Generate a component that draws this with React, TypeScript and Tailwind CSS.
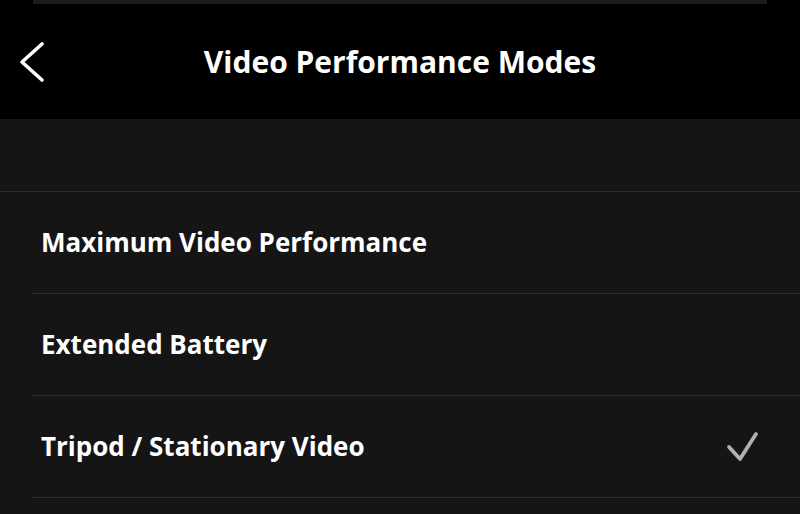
import React from "react";

const rows = [
  { label: "Maximum Video Performance", checked: false },
  { label: "Extended Battery", checked: false },
  { label: "Tripod / Stationary Video", checked: true },
  { label: "", checked: false },
];

export default function App() {
  return (
    <div
      className="w-[800px] h-[514px] overflow-hidden bg-[#151515] text-white"
      style={{ fontFamily: "'Open Sans', Lato, sans-serif" }}
    >
      <div className="bg-black h-[119px] flex flex-col">
        <div className="mx-[33px] h-[4px] bg-[#1c1c1c]" />
        <div className="relative flex-1 flex items-center justify-center">
          <svg
            className="absolute left-[18px] top-[37px]"
            width="28"
            height="42"
            viewBox="0 0 28 42"
            fill="none"
          >
            <path
              d="M24 3 L4 21 L24 39"
              stroke="white"
              strokeWidth="3.6"
              strokeLinecap="round"
              strokeLinejoin="round"
            />
          </svg>
          <h1 className="text-[30px] font-bold">Video Performance Modes</h1>
        </div>
      </div>
      <div className="h-[72px]" />
      <div className="border-t border-[#2a2a2a]">
        {rows.map((r, i) => (
          <div key={i} className="pl-[32px]">
            <div className="h-[102px] flex items-center justify-between border-b border-[#2a2a2a] pl-[9px] pr-[40px]">
              <span className="text-[26px] font-bold">{r.label}</span>
              {r.checked && (
                <svg width="34" height="32" viewBox="0 0 34 32" fill="none">
                  <path
                    d="M3 16 L14 28 L30 3"
                    stroke="#b0b0b0"
                    strokeWidth="3.8"
                    strokeLinecap="round"
                    strokeLinejoin="round"
                  />
                </svg>
              )}
            </div>
          </div>
        ))}
      </div>
    </div>
  );
}
